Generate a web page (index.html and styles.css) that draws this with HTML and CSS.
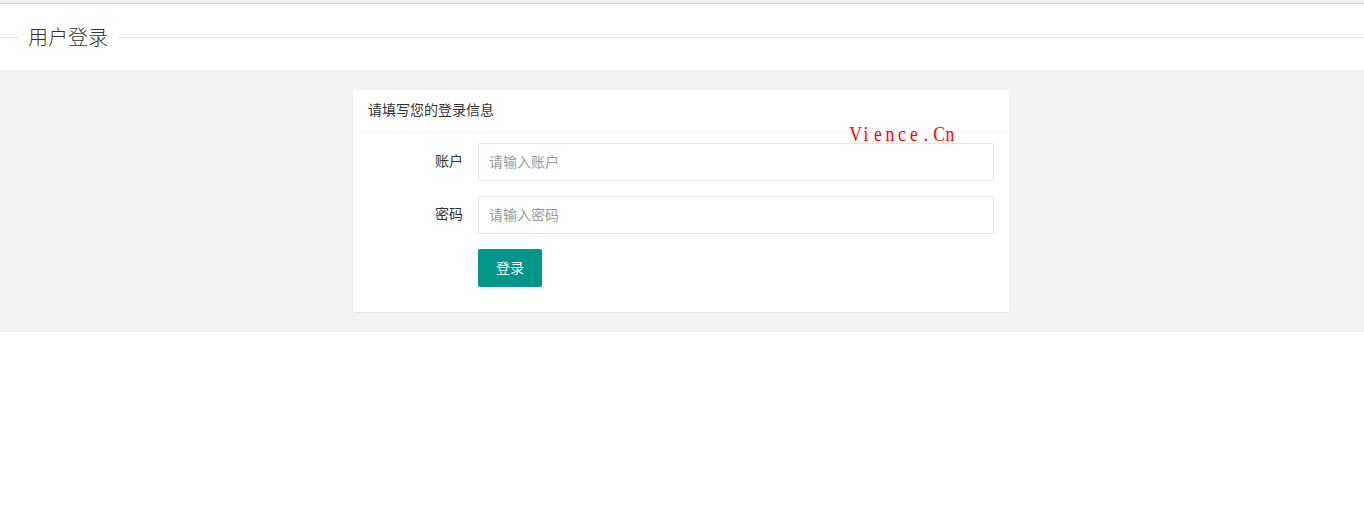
FILE: index.html
```html
<!DOCTYPE html>
<html lang="zh-CN">
<head>
<meta charset="utf-8">
<title>用户登录</title>
<link rel="stylesheet" href="styles.css">
</head>
<body>
<div class="topbar"></div>
<div class="header">
  <fieldset class="title-field">
    <legend>用户登录</legend>
  </fieldset>
</div>
<div class="main">
  <div class="card">
    <div class="card-header">请填写您的登录信息</div>
    <div class="card-body">
      <div class="form-item">
        <label class="form-label">账户</label>
        <div class="input-block"><input class="input" type="text" placeholder="请输入账户"></div>
      </div>
      <div class="form-item">
        <label class="form-label">密码</label>
        <div class="input-block"><input class="input" type="password" placeholder="请输入密码"></div>
      </div>
      <div class="form-item">
        <div class="input-block"><button class="btn" type="button">登录</button></div>
      </div>
    </div>
  </div>
</div>
<div class="watermark"><span>V</span><span>i</span><span>e</span><span>n</span><span>c</span><span>e</span><span>.</span><span>C</span><span>n</span></div>
</body>
</html>
```
FILE: styles.css
```css
* { box-sizing: border-box; }
html, body {
  margin: 0;
  padding: 0;
  background: #fff;
  font-family: "Noto Sans CJK SC", "Noto Sans", sans-serif;
  color: #333;
  font-size: 14px;
}
.topbar {
  height: 4px;
  background: #f2f2f2;
  border-bottom: 1px solid #d6d6d6;
}
.header {
  height: 66px;
  padding-top: 18px;
}
.title-field {
  margin: 0;
  padding: 0;
  border: none;
  border-top: 1px solid #e6e6e6;
}
.title-field legend {
  margin-left: 18px;
  padding: 0 10px;
  font-size: 20px;
  line-height: 30px;
  font-weight: 300;
  color: #333;
}
.main {
  background: #f2f2f2;
  padding: 20px 0;
}
.card {
  width: 656px;
  margin-left: 353px;
  background: #fff;
  border-radius: 2px;
  box-shadow: 0 1px 2px 0 rgba(0,0,0,.05);
}
.card-header {
  height: 43px;
  line-height: 38px;
  padding: 0 15px;
  border-bottom: 1px solid #f6f6f6;
  font-size: 14px;
  color: #333;
}
.card-body {
  padding: 10px 15px 10px;
}
.form-item {
  display: flex;
  margin-bottom: 15px;
}
.form-label {
  width: 110px;
  flex: none;
  padding: 7px 15px 11px;
  line-height: 20px;
  text-align: right;
  color: #333;
}
.input-block {
  flex: 1;
}
.form-item .input-block:first-child {
  margin-left: 110px;
}
.input {
  display: block;
  width: 100%;
  height: 38px;
  border: 1px solid #e6e6e6;
  border-radius: 2px;
  padding: 0 0 2px 10px;
  font-family: inherit;
  font-size: 14px;
  color: #333;
  background: #fff;
  outline: none;
}
.input::placeholder { color: #999; }
.btn {
  display: block;
  height: 38px;
  line-height: 36px;
  padding: 0 18px 2px;
  border: none;
  border-radius: 2px;
  background: #009688;
  color: #fff;
  font-family: inherit;
  font-size: 14px;
  cursor: pointer;
}
.watermark {
  position: absolute;
  left: 848px;
  top: 121px;
  display: flex;
  font-family: "Liberation Serif", serif;
  font-size: 22px;
  line-height: 26px;
  color: #ff0000;
}
.watermark span {
  display: inline-block;
  width: 12px;
  text-align: center;
  transform: scaleX(0.8);
}
```
